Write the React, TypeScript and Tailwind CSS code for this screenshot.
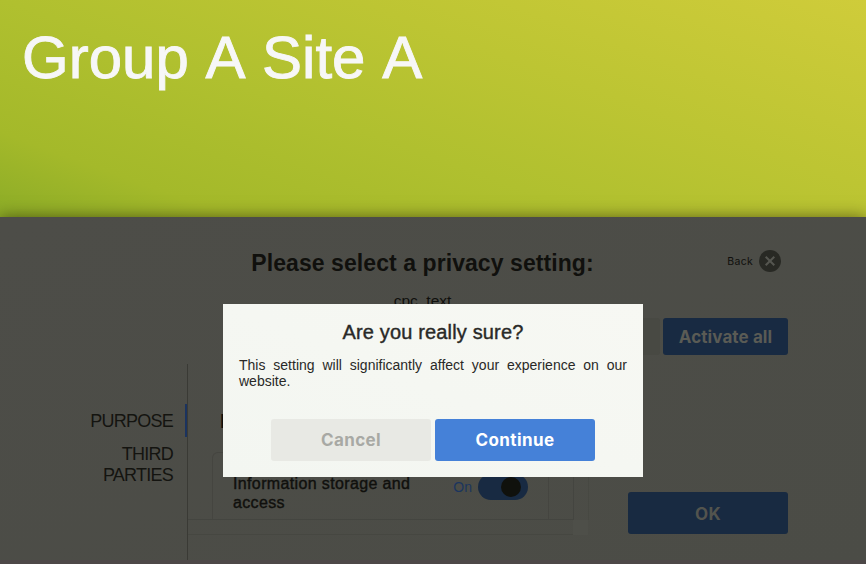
import React from "react";

function Nav() {
  return (
    <nav className="w-[188px] h-[196px] shrink-0 border-r border-[#3a3a35] pt-[40px] text-right text-[18px] leading-[21px] text-[#141410]">
      <div className="h-[33px] border-r-2 border-[#1b335f] pr-3 pt-[7px]">
        <span className="inline-block tracking-[-0.75px]">PURPOSE</span>
      </div>
      <div className="pr-[14px] pt-[7px] tracking-[-0.75px]">THIRD<br />PARTIES</div>
    </nav>
  );
}

function Purposes() {
  return (
    <div className="w-[401px] shrink-0 pt-[38px]">
      <div className="flex h-[118px]">
        <div className="w-[386px] border-r border-b border-[#444540]">
          <div className="h-[50px] pl-8 pt-[7px] text-[20px] font-bold leading-6 text-[#10100d]">Purpose</div>
          <div className="ml-6 flex h-[67px] w-[337px] justify-between rounded-t-md border border-b-0 border-[#454540] pl-5 pr-5 pt-[21px]">
            <div className="w-[200px] text-[16px] leading-[19px] tracking-[0.36px] text-[#10100d] [-webkit-text-stroke:0.4px_#10100d]">Information storage and access</div>
            <div className="flex h-[26px] items-center gap-[6px] text-[14px] text-[#1b355e]">
              <span>On</span>
              <span className="flex h-[26px] w-[50px] items-center justify-end rounded-full bg-[#182a42] pr-[7px]">
                <span className="size-5 rounded-full bg-[#10110d]" />
              </span>
            </div>
          </div>
        </div>
        <div className="w-[15px] border-r border-[#474842]" />
      </div>
      <div className="flex h-[15px]">
        <span className="w-[385px] border-b border-[#464741]" />
        <span className="w-[15px] bg-[#4e4f49]" />
      </div>
    </div>
  );
}

function Confirm() {
  return (
    <section className="absolute left-[223px] top-[304px] h-[173px] w-[420px] bg-linear-to-tr from-[#f3f6f1] to-[#f7f8f3] px-4 pt-4 text-[#292927]">
      <h2 className="text-center text-[20px] leading-6 tracking-[0.15px] [-webkit-text-stroke:0.4px_#292927]">Are you really sure?</h2>
      <p className="mt-[13px] text-justify text-[14px] leading-4">This setting will significantly affect your experience on our website.</p>
      <div className="mt-[30px] flex justify-center gap-1 font-[Inter] text-[17px] font-bold tracking-[0.4px]">
        <button className="h-[42px] w-40 rounded-[3px] bg-[#e8e9e4] pt-0.5 text-[#a8a9a4]">Cancel</button>
        <button className="h-[42px] w-40 rounded-[3px] bg-[#4581d8] pt-0.5 text-white">Continue</button>
      </div>
    </section>
  );
}

export default function App() {
  return (
    <div className="relative h-[564px] w-[866px] overflow-hidden bg-[#4b4c46] font-['Liberation_Sans',sans-serif]">
      <header className="h-[217px] bg-[linear-gradient(20deg,#8cac27_0%,#a4b92a_16%,#b0c02f_41%,#bdc533_65%,#cfcc3a_100%)] pl-[22px] pt-[23px]">
        <h1 className="text-[60px] leading-[70px] text-[#f7f7f7] [word-spacing:3.3px] [-webkit-text-stroke:0.9px_#f7f7f7]">Group A Site A</h1>
      </header>
      <main className="relative h-[343px] bg-linear-to-br from-[#4d4d48] to-[#4b4c46] shadow-[0_0_15px_rgba(30,20,0,0.55)]">
        <div className="flex h-[89px] pt-7">
          <div className="w-[251px]" />
          <div className="w-[343px] text-center text-[#10100d]">
            <h2 className="whitespace-nowrap text-[23px] font-bold leading-9 tracking-[0.07px]">Please select a privacy setting:</h2>
            <p className="mt-[10px] text-[15.5px] leading-5">cpc_text</p>
          </div>
          <div className="ml-auto mr-[85px] flex h-8 items-center gap-[6px] font-[Inter] text-[10.5px] tracking-[0.3px] text-[#10100d]">
            <span className="pt-0.5">Back</span>
            <svg width="22" height="22" viewBox="0 0 22 22"><circle cx="11" cy="11" r="11" fill="#282924" /><path d="m6.7 6.7 8.6 8.6m0-8.6-8.6 8.6" stroke="#555650" strokeWidth="2" /></svg>
          </div>
        </div>
        <div className="flex h-[58px] justify-end gap-[3px] pr-[78px] pt-3 font-[Inter] text-[17px] font-bold">
          <span className="h-[37px] w-[125px] rounded-[3px] bg-[#484943]" />
          <button className="h-[37px] w-[125px] rounded-[3px] bg-[#182a42] pt-0.5 tracking-[0.1px] text-[#5a5b55]">Activate all</button>
        </div>
        <div className="flex">
          <Nav />
          <Purposes />
          <div className="pl-[39px] pt-[128px]">
            <button className="h-[42px] w-40 rounded-[3px] bg-[#182a41] pt-[3px] font-[Inter] text-[17px] font-bold tracking-[0.4px] text-[#53544e]">OK</button>
          </div>
        </div>
      </main>
      <footer className="relative h-1 bg-[#4d4848]" />
      <Confirm />
    </div>
  );
}
